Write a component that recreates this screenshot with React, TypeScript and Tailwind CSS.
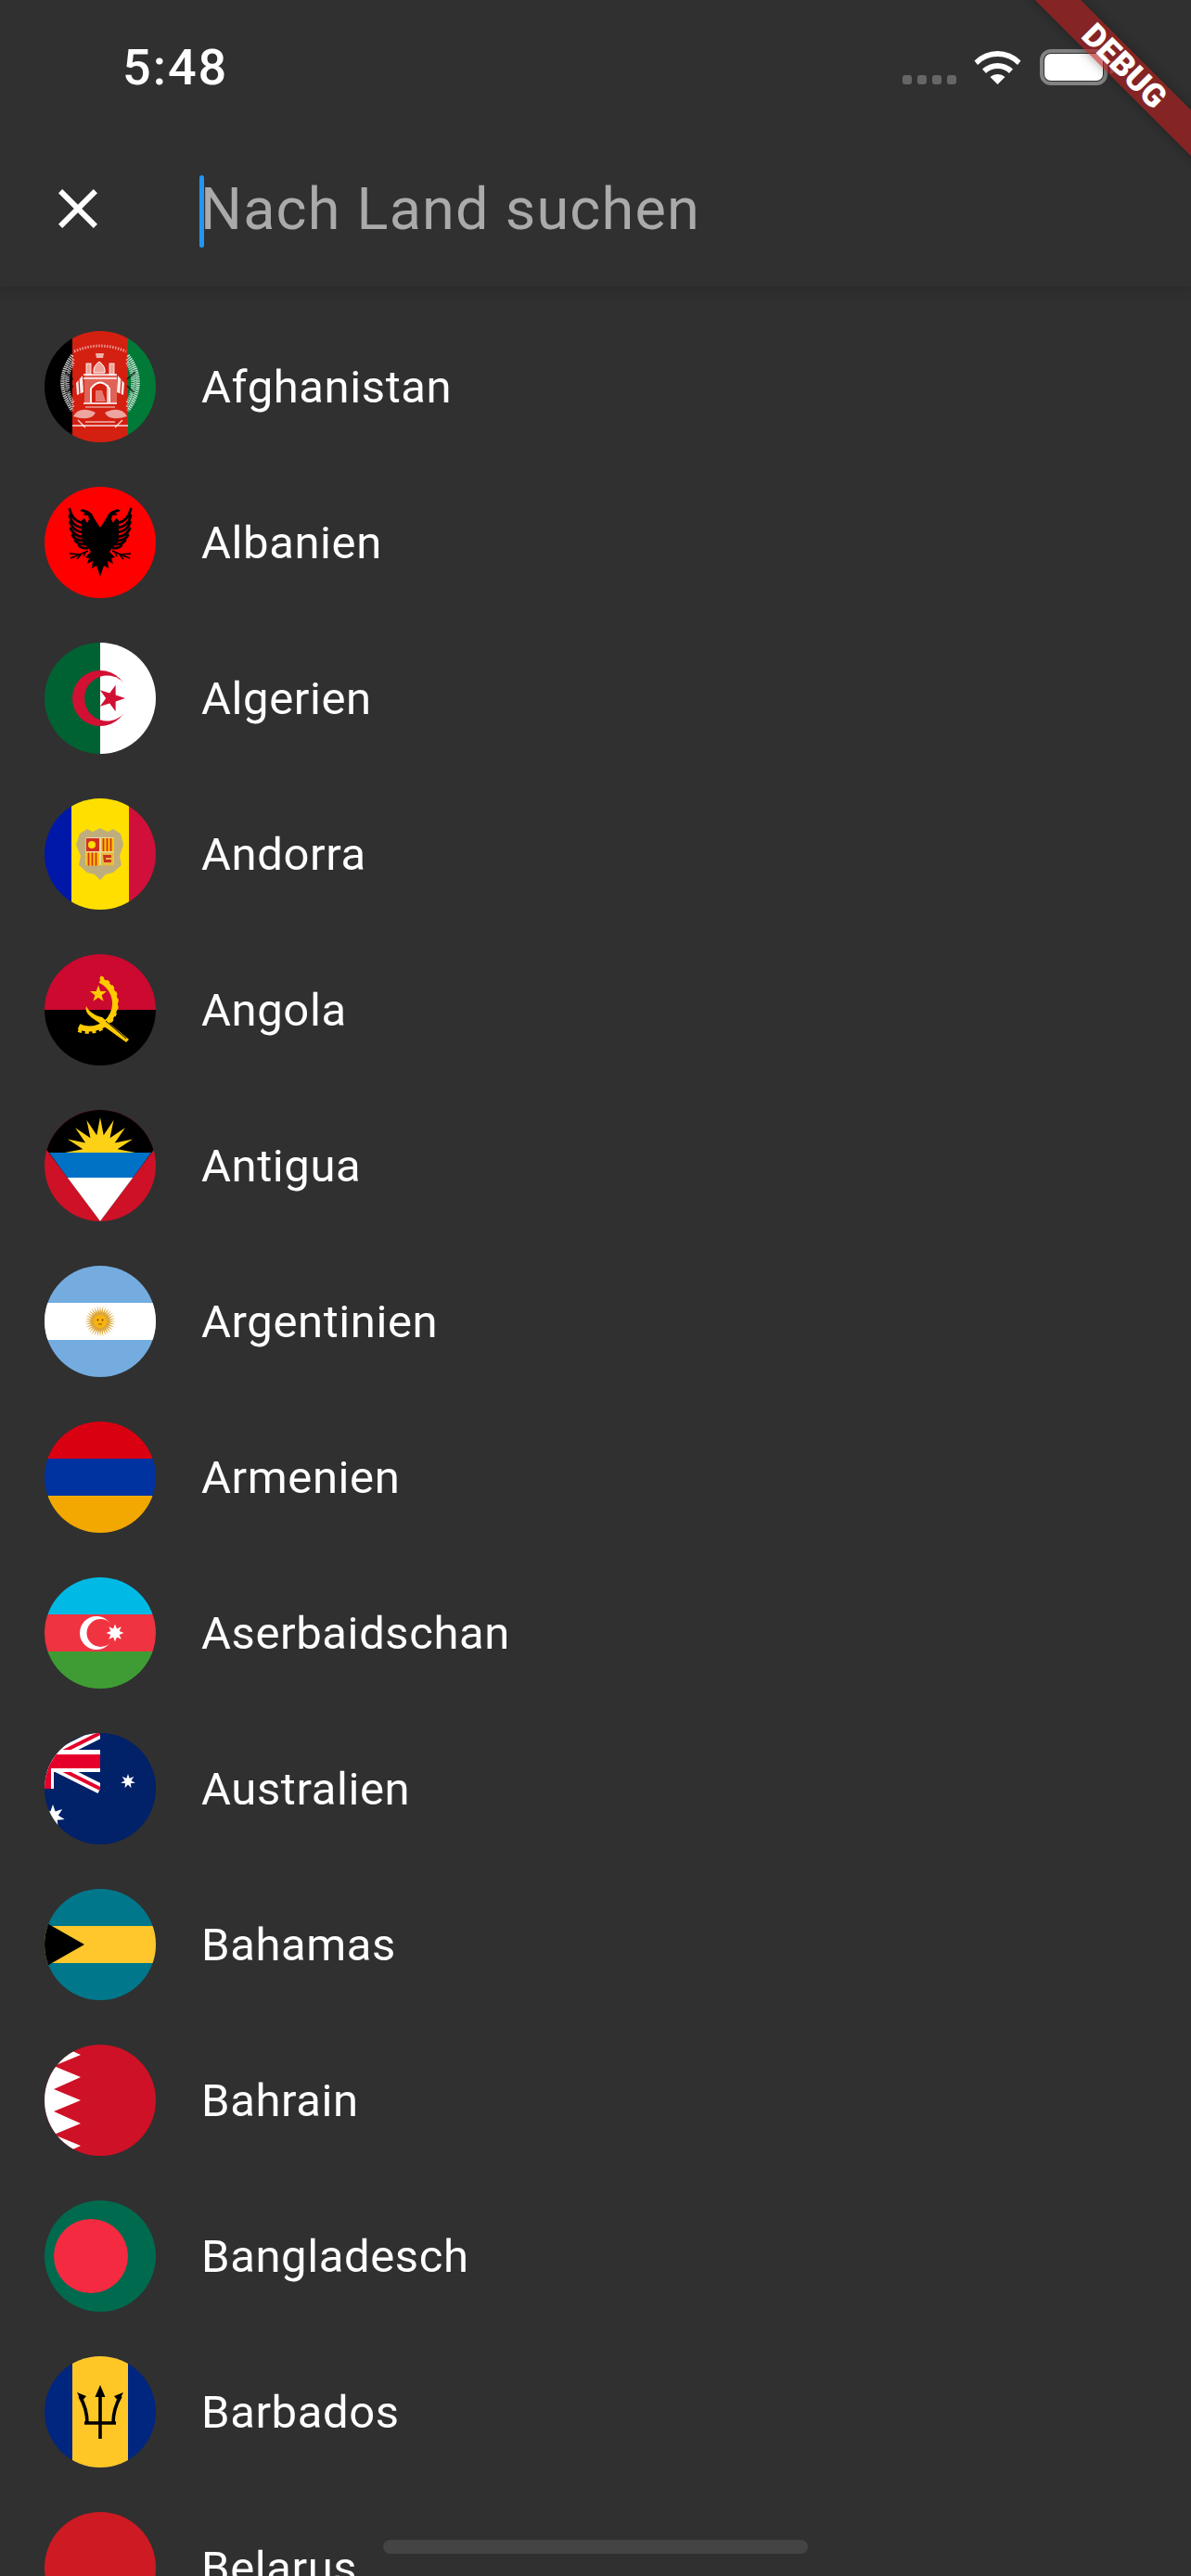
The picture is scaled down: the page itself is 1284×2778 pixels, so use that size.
import type { ReactNode } from 'react';
import { MdClose } from 'react-icons/md';

function star(cx: number, cy: number, R: number, r: number, n: number, rot = -90) {
    const pts: string[] = [];
    for (let i = 0; i < n * 2; i++) {
        const a = ((rot + (i * 180) / n) * Math.PI) / 180;
        const d = i % 2 === 0 ? R : r;
        pts.push(`${(cx + d * Math.cos(a)).toFixed(2)},${(cy + d * Math.sin(a)).toFixed(2)}`);
    }
    return pts.join(' ');
}

function Flag({ children }: { children: ReactNode }) {
    return (
        <svg viewBox="0 0 120 120" className="w-[120px] h-[120px] rounded-full overflow-hidden shrink-0">
            {children}
        </svg>
    );
}

const wreathHalf = (
    <>
        <path d="M30 26 Q8 55 30 86" fill="none" stroke="#fff" strokeWidth="3.5" strokeDasharray="1.4 0.9" opacity="0.8" />
        <path d="M31 30 Q13 55 31 82" fill="none" stroke="#fff" strokeWidth="3.5" strokeDasharray="1.1 1" opacity="0.7" />
        <path d="M31 34 Q19 55 31 78" fill="none" stroke="#fff" strokeWidth="3.5" strokeDasharray="1.4 0.9" opacity="0.65" />
        <path d="M22 44 L31 52 M24 66 L31 59" stroke="#111" strokeWidth="2" opacity="0.65" />
    </>
);

const afghanistan = (
    <>
        <rect width="30" height="120" fill="#000" />
        <rect x="30" width="60" height="120" fill="#D32011" />
        <rect x="90" width="30" height="120" fill="#007A36" />
        {wreathHalf}
        <g transform="matrix(-1 0 0 1 120 0)">{wreathHalf}</g>
        {/* script along the top */}
        <path d="M32 22 Q60 10 88 22" fill="none" stroke="#fff" strokeWidth="3" strokeDasharray="1.5 1.5" opacity="0.55" />
        {/* mosque */}
        <path d="M53 45 Q52 38 59 33 Q66 38 65 45 Z" fill="#f0a399" stroke="#fff" strokeWidth="1" />
        <path d="M55 24 H64 L63 29 H56 Z" fill="#fff" opacity="0.65" />
        <rect x="45" y="35" width="5" height="12" fill="#f0a399" stroke="#fff" strokeWidth="0.8" />
        <rect x="70" y="35" width="5" height="12" fill="#f0a399" stroke="#fff" strokeWidth="0.8" />
        <rect x="43" y="47" width="35" height="31" fill="#fff" opacity="0.3" />
        <path d="M42 47 H78 M42 51 H78 M42 78 H78" stroke="#fff" strokeWidth="1.4" />
        <path d="M50 77 V62 Q60 49 70 62 V77" fill="#D32011" stroke="#fff" strokeWidth="1.8" />
        <path d="M55 76 V64 H62 L66 76 Z" fill="#fff" opacity="0.4" />
        <path d="M68 58 V78" stroke="#fff" strokeWidth="1.4" />
        <path d="M41 48 L34 56 L35 69 L42 66 Z" fill="#fff" opacity="0.9" />
        <path d="M37 52 L38 68" stroke="#D32011" strokeWidth="1.2" />
        <path d="M79 48 L86 56 L85 69 L78 66 Z" fill="#fff" opacity="0.9" />
        <path d="M83 52 L82 68" stroke="#D32011" strokeWidth="1.2" />
        {/* sheaves and ribbon */}
        <path d="M31 92 Q38 80 55 88 Q50 98 31 92 Z" fill="#fff" opacity="0.6" />
        <path d="M89 92 Q82 80 65 88 Q70 98 89 92 Z" fill="#fff" opacity="0.6" />
        <path d="M44 82 H76" stroke="#fff" strokeWidth="1.2" opacity="0.7" />
        <path d="M30 102 H90" stroke="#fff" strokeWidth="1.4" opacity="0.85" />
        <path d="M44 98 H76" stroke="#fff" strokeWidth="1.2" opacity="0.85" />
        <path d="M36 96 L44 104 M84 96 L76 104" stroke="#fff" strokeWidth="1.2" opacity="0.85" />
    </>
);

const eagleHalf = (
    <>
        <path
            d="M60 44 L56 38 L53 33 L51 29 L47 26 L41 24 L38 26 L44 28 L41 30 L47 31 L48 35 L46 39 L43 34 L40 36 L40 50 L41 60 L47 66 L50 70 L44 76 L48 77 L46 83 L52 80 L51 88 L56 85 L60 97 Z"
            fill="#000"
        />
        <path
            d="M41 39 Q30 37 27 24 M41 44 Q30 43 27 31 M41 49 Q31 48 27.5 38 M41 54 Q32 53 28 45 M42 58 Q33 58 30 52 M43 62 Q36 62 33 58 M46 66 Q40 67 37 63"
            fill="none"
            stroke="#000"
            strokeWidth="2.8"
            strokeLinecap="round"
        />
        <path d="M47 69 L38 73 L27 72 M38 73 L28 77 M40 72 L35 78 M44 71 L42 75" fill="none" stroke="#000" strokeWidth="1.5" />
    </>
);

const albania = (
    <>
        <rect width="120" height="120" fill="#FF0000" />
        {eagleHalf}
        <g transform="matrix(-1 0 0 1 120 0)">{eagleHalf}</g>
    </>
);

const algeria = (
    <>
        <rect width="60" height="120" fill="#006233" />
        <rect x="60" width="60" height="120" fill="#fff" />
        <circle cx="60" cy="60" r="30" fill="#D21034" />
        <path d="M60 36.7 A 24.5 24.5 0 0 0 60 83.3 Z" fill="#006233" />
        <path d="M60 36.7 A 24.5 24.5 0 1 1 60 83.3 Z" fill="#fff" />
        <polygon points={star(72, 60, 15, 5.8, 5, 0)} fill="#D21034" />
    </>
);

const andorra = (
    <>
        <rect width="29" height="120" fill="#0018A8" />
        <rect x="29" width="62" height="120" fill="#FEDF00" />
        <rect x="91" width="29" height="120" fill="#D0103A" />
        <path d="M38 38 L46 33 L52 36 L60 32 L68 36 L74 33 L82 38 L85 50 L81 62 L83 72 L74 80 L66 82 L60 88 L54 82 L46 80 L37 72 L39 62 L34 50 Z" fill="#BFAE7C" />
        <rect x="44.5" y="42" width="30" height="30" fill="#e8d9a0" />
        <rect x="45" y="43" width="14" height="14" fill="#D0301F" />
        <circle cx="51" cy="50" r="4" fill="#FEDF00" />
        <rect x="61" y="43" width="13" height="14" fill="#FEC400" />
        <path d="M63.5 43 V57 M67.5 43 V57 M71.5 43 V57" stroke="#D0301F" strokeWidth="1.8" />
        <rect x="45" y="58.5" width="14" height="14" fill="#FEC400" />
        <path d="M47.5 58.5 V72.5 M51.5 58.5 V72.5 M55.5 58.5 V72.5" stroke="#D0301F" strokeWidth="1.8" />
        <rect x="61" y="58.5" width="13" height="14" fill="#E8B93B" />
        <path d="M63 61 H72 V64 H66 V66 H72 V69 H64 Z" fill="#C8301F" />
    </>
);

const angola = (
    <>
        <rect width="120" height="60" fill="#CC092F" />
        <rect y="60" width="120" height="60" fill="#000" />
        <polygon points={star(58, 43, 9.5, 3.8, 5)} fill="#FFCB00" />
        <path d="M60 28 A 27 27 0 0 1 37 78" fill="none" stroke="#FFCB00" strokeWidth="6" />
        <path d="M60 25 A 30 30 0 0 1 34 81" fill="none" stroke="#FFCB00" strokeWidth="4" strokeDasharray="4 3.5" />
        <path d="M45 56 C43 62 48 67 56 72 L88 95 L91 92 L62 68 C54 66 48 62 45 56 Z" fill="#FFCB00" />
        <path d="M66 72 L88 91" stroke="#000" strokeWidth="1" />
    </>
);

const antigua = (
    <>
        <rect width="120" height="120" fill="#CE1126" />
        <polygon points="-30,0 150,0 60,120" fill="#000" />
        <clipPath id="ag-sun">
            <rect width="120" height="46" />
        </clipPath>
        <polygon points={star(60, 46, 38, 19, 16)} fill="#FCD116" clipPath="url(#ag-sun)" />
        <polygon points="5,46 115,46 95.25,73 24.75,73" fill="#0072C6" />
        <polygon points="24.75,73 95.25,73 60,120" fill="#fff" />
    </>
);

const argentina = (
    <>
        <rect width="120" height="120" fill="#74ACDF" />
        <rect y="40" width="120" height="40" fill="#fff" />
        <polygon points={star(60, 60, 17, 9.5, 32)} fill="#DDA63A" />
        <circle cx="60" cy="60" r="7" fill="#F6B40E" />
        <circle cx="57.5" cy="58.5" r="1" fill="#85340A" />
        <circle cx="62.5" cy="58.5" r="1" fill="#85340A" />
        <path d="M58 63 H62" stroke="#85340A" strokeWidth="0.8" />
    </>
);

const armenia = (
    <>
        <rect width="120" height="40" fill="#D90012" />
        <rect y="40" width="120" height="40" fill="#0033A0" />
        <rect y="80" width="120" height="40" fill="#F2A800" />
    </>
);

const azerbaijan = (
    <>
        <rect width="120" height="40" fill="#00B9E4" />
        <rect y="40" width="120" height="40" fill="#EF3340" />
        <rect y="80" width="120" height="40" fill="#3F9C35" />
        <circle cx="56" cy="60" r="18" fill="#fff" />
        <circle cx="60.5" cy="60" r="15" fill="#EF3340" />
        <polygon points={star(76, 60, 9.5, 5, 8)} fill="#fff" />
    </>
);

const australia = (
    <>
        <rect width="120" height="120" fill="#012169" />
        <path d="M0 30 L60 0 M0 30 L60 60" stroke="#fff" strokeWidth="11" />
        <path d="M0 30 L60 0 M0 30 L60 60" stroke="#E4002B" strokeWidth="4" />
        <rect y="18" width="60" height="24" fill="#fff" />
        <rect y="0" width="10" height="60" fill="#fff" />
        <rect y="23" width="60" height="15" fill="#E4002B" />
        <rect y="0" width="7" height="60" fill="#E4002B" />
        <rect x="60" width="60" height="60" fill="#012169" />
        <polygon points={star(90, 52, 8, 3.6, 7)} fill="#fff" />
        <polygon points={star(9, 90, 13, 6, 7)} fill="#fff" />
    </>
);

const bahamas = (
    <>
        <rect width="120" height="120" fill="#00778B" />
        <rect y="40" width="120" height="40" fill="#FFC72C" />
        <polygon points="-15,27 43,60 -15,93" fill="#000" />
    </>
);

const bahrain = (
    <>
        <rect width="120" height="120" fill="#CE1126" />
        <polygon points="0,0 15,0 39,11 10,23 39,35 10,48 39,60 10,72 39,85 10,97 39,109 15,120 0,120" fill="#fff" />
    </>
);

const bangladesh = (
    <>
        <rect width="120" height="120" fill="#006A4E" />
        <circle cx="50" cy="60" r="40" fill="#F42A41" />
    </>
);

const barbados = (
    <>
        <rect width="120" height="120" fill="#00267F" />
        <rect x="30" width="60" height="120" fill="#FFC726" />
        <polygon points="60,31 65.5,44 54.5,44" fill="#000" />
        <path d="M60 42 V89 M43 72 H77 M46 72 C46 60 42 50 38 43 M74 72 C74 60 78 50 82 43" fill="none" stroke="#000" strokeWidth="3.6" />
        <polygon points="35,39 45,43 40,49" fill="#000" />
        <polygon points="85,39 75,43 80,49" fill="#000" />
    </>
);

const belarus = <rect width="120" height="120" fill="#CE1A22" />;

const countries = [
    { name: 'Afghanistan', flag: afghanistan },
    { name: 'Albanien', flag: albania },
    { name: 'Algerien', flag: algeria },
    { name: 'Andorra', flag: andorra },
    { name: 'Angola', flag: angola },
    { name: 'Antigua', flag: antigua },
    { name: 'Argentinien', flag: argentina },
    { name: 'Armenien', flag: armenia },
    { name: 'Aserbaidschan', flag: azerbaijan },
    { name: 'Australien', flag: australia },
    { name: 'Bahamas', flag: bahamas },
    { name: 'Bahrain', flag: bahrain },
    { name: 'Bangladesch', flag: bangladesh },
    { name: 'Barbados', flag: barbados },
    { name: 'Belarus', flag: belarus },
];

export default function App() {
    return (
        <div className="relative w-[1284px] h-[2778px] overflow-hidden bg-[#303030] text-white font-['Roboto',sans-serif]">
            {/* Header */}
            <div className="relative z-10 bg-[#303030] shadow-[0_6px_12px_rgba(0,0,0,0.12)]">
                <div className="h-[141px] pt-[53px] pl-[132px] pr-[90px] flex justify-between items-start">
                    <span className="text-[54px] leading-[39px] font-medium tracking-[2px]">5:48</span>
                    <div className="flex items-end">
                        <div className="flex gap-[6px] mb-[1px] mr-[19px]">
                            <span className="w-[10px] h-[10px] rounded-[3px] bg-[#666]" />
                            <span className="w-[10px] h-[10px] rounded-[3px] bg-[#666]" />
                            <span className="w-[10px] h-[10px] rounded-[3px] bg-[#666]" />
                            <span className="w-[10px] h-[10px] rounded-[3px] bg-[#666]" />
                        </div>
                        <svg viewBox="0 0 51 38" className="w-[51px] h-[38px] mb-[1px] mr-[20px]">
                            <path d="M0.5 12.5 A 35 35 0 0 1 50.5 12.5 L47 17 A 30 30 0 0 0 4 17 Z" fill="#fff" />
                            <path d="M9 21.5 A 24 24 0 0 1 42 21.5 L38 26 A 18 18 0 0 0 13 26 Z" fill="#fff" />
                            <path d="M17.5 30 A 12 12 0 0 1 33.5 30 L25.5 38 Z" fill="#fff" />
                        </svg>
                        <div className="relative w-[73px] h-[39px] border-[4px] border-white/40 rounded-[12px] p-px">
                            <div className="w-full h-full bg-white rounded-[7px]" />
                            <span className="absolute -right-[11px] top-[9px] w-[4px] h-[13px] rounded-r-[3px] bg-white/40" />
                        </div>
                    </div>
                </div>
                <div className="relative h-[168px] flex items-center">
                    <button className="w-[72px] h-[72px] ml-[48px] mr-[96px] shrink-0 text-white">
                        <MdClose size={72} />
                    </button>
                    <span className="text-[63px] leading-none tracking-[1.2px] text-[#aaaaaa]">Nach Land suchen</span>
                    <span className="absolute left-[215px] top-[48px] w-[5px] h-[78px] rounded-full bg-[#2196F3]" />
                </div>
            </div>

            {/* Country list */}
            <div className="pt-[24px]">
                {countries.map((country) => (
                    <div key={country.name} className="h-[168px] pl-[48px] flex items-center gap-[49px]">
                        <Flag>{country.flag}</Flag>
                        <span className="text-[49px] leading-none tracking-[0.6px]">{country.name}</span>
                    </div>
                ))}
            </div>

            {/* Home indicator */}
            <div className="absolute left-[413px] top-[2739px] w-[458px] h-[15px] rounded-full bg-[#444444] z-10" />

            {/* Debug banner */}
            <div className="absolute z-20 left-[1012px] top-[54px] w-[400px] h-[35px] rotate-45 flex items-center justify-center bg-[#B71C1CA0] shadow-[0_0_12px_rgba(0,0,0,0.35)]">
                <span className="text-[35px] leading-none font-black text-white">DEBUG</span>
            </div>
        </div>
    );
}
